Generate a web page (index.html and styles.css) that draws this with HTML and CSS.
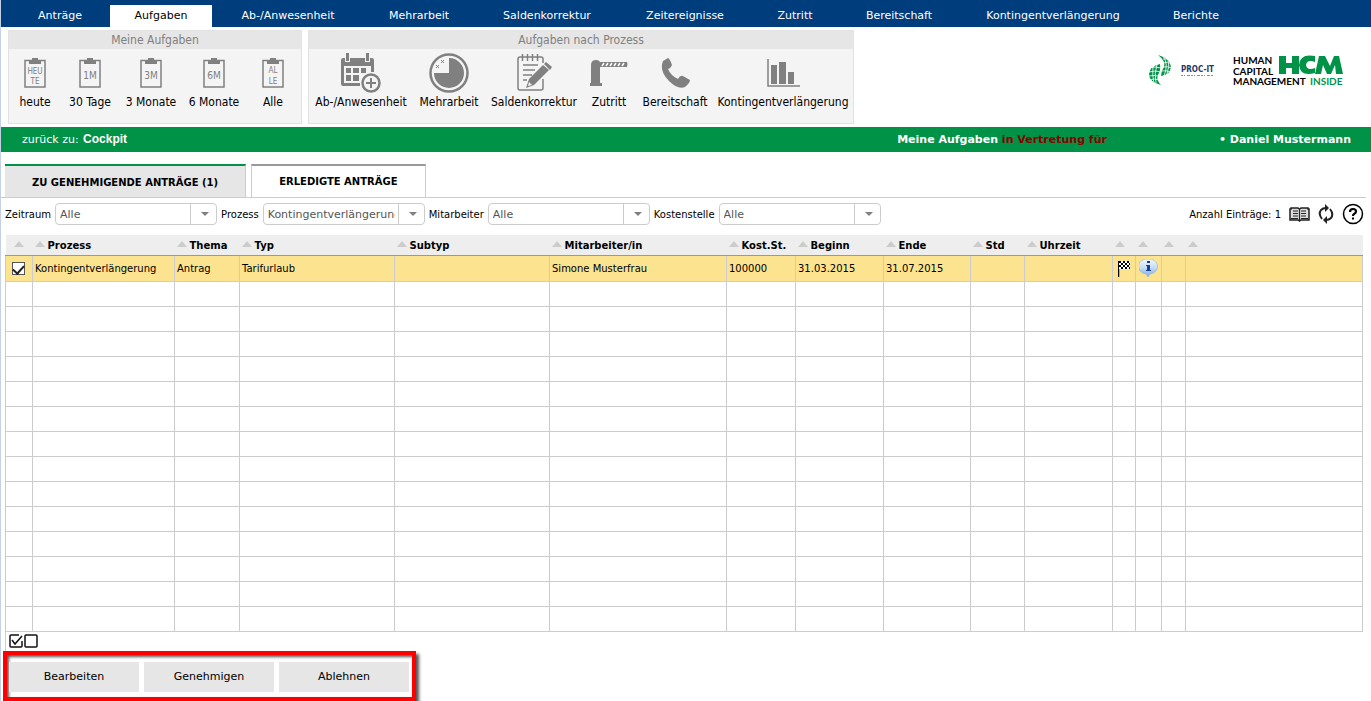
FILE: index.html
```html
<!DOCTYPE html>
<html lang="de">
<head>
<meta charset="utf-8">
<title>Meine Aufgaben</title>
<link rel="stylesheet" href="styles.css">
</head>
<body>
<svg class="defs" width="0" height="0" aria-hidden="true">
  <symbol id="board" viewBox="0 0 22 30">
    <path d="M1 2.500H21V29H1Z" fill="#f4f4f4" stroke="#808080" stroke-width="1.500"/>
    <path d="M5 2h3V0h6v2h3v4H5z" fill="#808080"/>
  </symbol>
</svg>
<nav class="nav">
  <a href="#">Anträge</a>
  <a href="#" class="current" aria-current="page">Aufgaben</a>
  <a href="#">Ab-/Anwesenheit</a>
  <a href="#">Mehrarbeit</a>
  <a href="#">Saldenkorrektur</a>
  <a href="#">Zeitereignisse</a>
  <a href="#">Zutritt</a>
  <a href="#">Bereitschaft</a>
  <a href="#">Kontingentverlängerung</a>
  <a href="#">Berichte</a>
</nav>

<header class="toolbar">
  <section class="panel">
    <h2>Meine Aufgaben</h2>
    <div class="tools tools-time">
      <a href="#"><span class="icon"><svg width="22" height="30" viewBox="0 0 22 30"><use href="#board"/><text x="11" y="16" class="note small">HEU</text><text x="11" y="26" class="note small">TE</text></svg></span>heute</a>
      <a href="#"><span class="icon"><svg width="22" height="30" viewBox="0 0 22 30"><use href="#board"/><text x="11" y="21" class="note">1M</text></svg></span>30 Tage</a>
      <a href="#"><span class="icon"><svg width="22" height="30" viewBox="0 0 22 30"><use href="#board"/><text x="11" y="21" class="note">3M</text></svg></span>3 Monate</a>
      <a href="#"><span class="icon"><svg width="22" height="30" viewBox="0 0 22 30"><use href="#board"/><text x="11" y="21" class="note">6M</text></svg></span>6 Monate</a>
      <a href="#"><span class="icon"><svg width="22" height="30" viewBox="0 0 22 30"><use href="#board"/><text x="11" y="15" class="note small">AL</text><text x="11" y="26" class="note small">LE</text></svg></span>Alle</a>
    </div>
  </section>
  <section class="panel">
    <h2>Aufgaben nach Prozess</h2>
    <div class="tools tools-process">
      <a href="#"><span class="icon"><svg width="40" height="40" viewBox="0 0 40 40">
        <path d="M0 7q0-2 2-2h29q2 0 2 2v12h-3v-6H3v17h16v3H2q-2 0-2-2z" fill="#808080"/>
        <path d="M4 0h5v9H4zM24 0h5v9h-5z" fill="#f4f4f4"/>
        <path d="M5 0h3v8H5zM25 0h3v8h-3zM5 15h5v5H5zM12 15h6v5h-6zM20 15h5v5h-5zM5 22h5v6H5zM12 22h6v6h-6z" fill="#808080"/>
        <circle cx="30" cy="30" r="11" fill="#f4f4f4"/>
        <circle cx="30" cy="30" r="8.500" fill="#f4f4f4" stroke="#808080" stroke-width="2.500"/>
        <path d="M30 25v10M25 30h10" stroke="#808080" stroke-width="2"/></svg></span>Ab-/Anwesenheit</a>
      <a href="#"><span class="icon"><svg width="40" height="40" viewBox="0 0 40 40">
        <circle cx="20" cy="20" r="18.500" fill="none" stroke="#808080" stroke-width="2.500"/>
        <path d="M20 5A15 15 0 1 1 5 20H20Z" fill="#808080"/>
        <path d="M12 7l3 3M15 7l-3 3M7 12l3 3M10 12l-3 3" stroke="#808080"/></svg></span>Mehrarbeit</a>
      <a href="#"><span class="icon"><svg width="36" height="38" viewBox="0 0 36 38">
        <path d="M27 25v9q0 2-2 2H4q-2 0-2-2V5q0-2 2-2h21q2 0 2 2v4" fill="none" stroke="#808080" stroke-width="1.500"/>
        <path d="M6.500 0v7M11.500 0v7M16.500 0v7M21.500 0v7" stroke="#808080" stroke-width="1.500"/>
        <path d="M7 11h15M7 16h12M7 21h9M7 26h4" stroke="#808080" stroke-width="1.500"/>
        <path d="M10 34l3-9 14-14 6 5-15 15z" fill="#808080"/><path d="M12 32l1-4 3 3z" fill="#f4f4f4"/>
        <path d="M28 10l2-2 6 5-2 3z" fill="#808080"/></svg></span>Saldenkorrektur</a>
      <a href="#"><span class="icon"><svg width="38" height="26" viewBox="0 0 38 26">
        <path d="M1 15V5q0-5 5-5t4 5v18h2v3H0v-3h1z" fill="#808080"/>
        <path d="M10 2h27q1 2 0 5H10z" fill="#808080"/>
        <path d="M12 6l2-3M16 6l2-3M20 6l2-3M24 6l2-3M28 6l2-3M32 6l2-3" stroke="#fff" stroke-width="1.500"/></svg></span>Zutritt</a>
      <a href="#"><span class="icon"><svg width="29" height="30" viewBox="0 0 29 30">
        <path d="M2 3L7 0q2 1 4 7-1 3-4 4 3 7 10 10 2-4 5-3l7 4q0 3-5 7-7 3-16-6Q-2 13 2 3z" fill="#808080"/></svg></span>Bereitschaft</a>
      <a href="#"><span class="icon"><svg width="33" height="28" viewBox="0 0 33 28">
        <path d="M1 0v27h32" fill="none" stroke="#808080" stroke-width="1.500"/>
        <path d="M4 6h6v19H4zM12 3h7v22h-7zM21 13h6v12h-6z" fill="#808080"/></svg></span>Kontingentverlängerung</a>
    </div>
  </section>
  <div class="logos">
    <svg width="68" height="31" viewBox="0 0 68 31" role="img" aria-label="PROC-IT">
      <g fill="#009247">
        <path d="M9 0Q21 3 22 12 21 20 12 21 12 16 15 12 17 6 9 0z"/>
        <path d="M11 9Q1 11 0 19 0 27 12 30 7 25 9 20 12 15 11 9z"/>
      </g>
      <path d="M0 13Q6 11 12 13M0 17Q6 15 12 17M0 21Q5 20 10 21M1 25Q5 23 10 25M14 4Q18 3 22 6M14 8Q18 6 23 9M14 12Q18 11 23 13M12 16Q17 15 22 17M4 10Q3 20 5 29M8 9Q5 19 7 28M14 1Q20 9 15 21M19 4Q21 11 18 19" fill="none" stroke="#fff" stroke-width=".8"/>
      <text x="32" y="17" class="proc">PROC-IT</text>
      <path d="M32 20.500h33" stroke="#8290ad" stroke-dasharray="2 1 1 2 3 1"/>
    </svg>
    <svg width="110" height="32" viewBox="0 0 110 32" role="img" aria-label="Human Capital Management inside HCM">
      <text x="0" y="9" class="word">HUMAN</text>
      <text x="0" y="20" class="word">CAPITAL</text>
      <text x="0" y="30" class="word">MANAGEMENT</text>
      <text x="77" y="30" class="word green">INSIDE</text>
      <path d="M46 1h7v7h6V1h7v18h-7v-6h-6v6h-7z" fill="#009247"/>
      <path d="M82 1v6q-8-3-9 3 1 6 9 3v5Q67 22 66 10 67-2 82 1zM86 1h6l5 10 4-10h5l4 18h-7l-1-9-4 9h-4l-4-9-2 9h-6z" fill="#009247"/>
    </svg>
  </div>
</header>

<div class="status">
  <p>zurück zu: <a href="#">Cockpit</a></p>
  <p class="user"><b>Meine Aufgaben <em>in Vertretung für</em></b><b>• Daniel Mustermann</b></p>
</div>

<main>
  <div class="tabs">
    <button type="button" class="tab active">ZU GENEHMIGENDE ANTRÄGE (1)</button>
    <button type="button" class="tab">ERLEDIGTE ANTRÄGE</button>
  </div>

  <div class="filters">
    <label for="f1">Zeitraum</label><span class="combo"><select id="f1"><option>Alle</option></select></span>
    <label for="f2">Prozess</label><span class="combo"><select id="f2"><option>Kontingentverlängerung</option></select></span>
    <label for="f3">Mitarbeiter</label><span class="combo"><select id="f3"><option>Alle</option></select></span>
    <label for="f4">Kostenstelle</label><span class="combo"><select id="f4"><option>Alle</option></select></span>
    <span class="count">Anzahl Einträge: 1</span>
    <span class="icons">
    <button type="button" class="tool" aria-label="Handbuch"><svg width="21" height="15" viewBox="0 0 21 15"><path d="M1 2h1V1h7l1.500 1L12 1h7v1h1v11h-8l-1.500 1L9 13H1z" fill="#ddd" stroke="#222" stroke-width="1.500"/><path d="M10.500 2v12M4 4h5M4 6.500h5M4 9h5M12 4h5M12 6.500h5M12 9h5M2 11.500h7M12 11.500h7" stroke="#222" stroke-width="1.200"/></svg></button>
    <button type="button" class="tool" aria-label="Aktualisieren"><svg width="16" height="20" viewBox="0 0 16 20"><path d="M4 15Q0 10 3 6q2-2 5-2M12 5q4 5 1 9-2 2-5 2" fill="none" stroke="#222" stroke-width="2"/><path d="M7 0l4 4-4 4zM9 12l-4 4 4 4z" fill="#222"/></svg></button>
    <button type="button" class="tool" aria-label="Hilfe"><svg width="22" height="22" viewBox="0 0 22 22"><circle cx="11" cy="11" r="9.500" fill="#fff" stroke="#000" stroke-width="1.500"/><path d="M8 9q0-3 3-3t3 2.500q0 1.500-2 2.500-1 .5-1 2" fill="none" stroke="#000" stroke-width="2.200"/><path d="M10 14.500h2v2h-2z"/></svg></button>
    </span>
  </div>

  <table class="grid">
    <colgroup><col class="c27"><col class="c142"><col class="c65"><col class="c155"><col class="c155"><col class="c177"><col class="c69"><col class="c88"><col class="c87"><col class="c54"><col class="c88"><col class="c23"><col class="c26"><col class="c24"><col></colgroup>
    <thead><tr><th class="mid"></th><th>Prozess</th><th>Thema</th><th>Typ</th><th>Subtyp</th><th>Mitarbeiter/in</th><th>Kost.St.</th><th>Beginn</th><th>Ende</th><th>Std</th><th>Uhrzeit</th><th></th><th></th><th></th><th></th></tr></thead>
    <tbody>
      <tr class="selected"><td class="mid"><input type="checkbox" checked aria-label="Antrag auswählen"></td><td>Kontingentverlängerung</td><td>Antrag</td><td>Tarifurlaub</td><td></td><td>Simone Musterfrau</td><td>100000</td><td>31.03.2015</td><td>31.07.2015</td><td></td><td></td>
        <td class="mid"><svg width="12" height="17" viewBox="0 0 12 17"><path d="M.5 1v16" stroke="#000" stroke-width="1.500"/><path d="M1 1h11v8H1z" fill="#fff"/><path d="M1 1h2v2H1zM5 1h2v2H5zM9 1h2v2H9zM3 3h2v2H3zM7 3h2v2H7zM11 3h1v2h-1zM1 5h2v2H1zM5 5h2v2H5zM9 5h2v2H9zM3 7h2v2H3zM7 7h2v2H7zM11 7h1v2h-1z"/></svg></td>
        <td class="mid"><svg width="20" height="18" viewBox="0 0 20 18"><defs><linearGradient id="b" x2="0" y2="1"><stop offset="0" stop-color="#f2f8fe"/><stop offset=".5" stop-color="#c3dcf6"/><stop offset="1" stop-color="#7fa9dc"/></linearGradient></defs><path d="M9 0a8.500 7.500 0 0 1 2 15l-2 3-2-3A8.500 7.500 0 0 1 9 0z" fill="url(#b)" stroke="#8db2e2" stroke-width=".6"/><path d="M8 2h3v2H8zM7 6h4v5h1v1H7v-1h1V7H7z" fill="#173d9a"/></svg></td>
        <td></td><td></td></tr>
      <tr><td></td><td></td><td></td><td></td><td></td><td></td><td></td><td></td><td></td><td></td><td></td><td></td><td></td><td></td><td></td></tr>
      <tr><td></td><td></td><td></td><td></td><td></td><td></td><td></td><td></td><td></td><td></td><td></td><td></td><td></td><td></td><td></td></tr>
      <tr><td></td><td></td><td></td><td></td><td></td><td></td><td></td><td></td><td></td><td></td><td></td><td></td><td></td><td></td><td></td></tr>
      <tr><td></td><td></td><td></td><td></td><td></td><td></td><td></td><td></td><td></td><td></td><td></td><td></td><td></td><td></td><td></td></tr>
      <tr><td></td><td></td><td></td><td></td><td></td><td></td><td></td><td></td><td></td><td></td><td></td><td></td><td></td><td></td><td></td></tr>
      <tr><td></td><td></td><td></td><td></td><td></td><td></td><td></td><td></td><td></td><td></td><td></td><td></td><td></td><td></td><td></td></tr>
      <tr><td></td><td></td><td></td><td></td><td></td><td></td><td></td><td></td><td></td><td></td><td></td><td></td><td></td><td></td><td></td></tr>
      <tr><td></td><td></td><td></td><td></td><td></td><td></td><td></td><td></td><td></td><td></td><td></td><td></td><td></td><td></td><td></td></tr>
      <tr><td></td><td></td><td></td><td></td><td></td><td></td><td></td><td></td><td></td><td></td><td></td><td></td><td></td><td></td><td></td></tr>
      <tr><td></td><td></td><td></td><td></td><td></td><td></td><td></td><td></td><td></td><td></td><td></td><td></td><td></td><td></td><td></td></tr>
      <tr><td></td><td></td><td></td><td></td><td></td><td></td><td></td><td></td><td></td><td></td><td></td><td></td><td></td><td></td><td></td></tr>
      <tr><td></td><td></td><td></td><td></td><td></td><td></td><td></td><td></td><td></td><td></td><td></td><td></td><td></td><td></td><td></td></tr>
      <tr><td></td><td></td><td></td><td></td><td></td><td></td><td></td><td></td><td></td><td></td><td></td><td></td><td></td><td></td><td></td></tr>
      <tr><td></td><td></td><td></td><td></td><td></td><td></td><td></td><td></td><td></td><td></td><td></td><td></td><td></td><td></td><td></td></tr>
    </tbody>
  </table>

  <div class="marks">
    <button type="button" class="tool" aria-label="Alle auswählen"><svg width="14" height="14" viewBox="0 0 14 14"><path d="M10 1H2Q1 1 1 2v10q0 1 1 1h10q1 0 1-1V7" fill="none" stroke="#111" stroke-width="1.500"/><path d="M3 6l3 4 7-8" fill="none" stroke="#111" stroke-width="1.500"/></svg></button>
    <button type="button" class="tool" aria-label="Auswahl aufheben"><svg width="14" height="14" viewBox="0 0 14 14"><rect x="1" y="1" width="12" height="12" rx="1" fill="none" stroke="#111" stroke-width="1.500"/></svg></button>
  </div>

  <div class="actions">
    <button type="button">Bearbeiten</button>
    <button type="button">Genehmigen</button>
    <button type="button">Ablehnen</button>
  </div>
</main>
</body>
</html>
```
FILE: styles.css
```css
* { box-sizing: border-box; }
body {
  margin: 0;
  min-height: 100vh;
  border-left: 1px solid #c3d0e6;
  background: #fff;
  color: #000;
  font: 11px/14px Verdana, "DejaVu Sans", sans-serif;
}
a { color: inherit; text-decoration: none; }
button { border: 0; padding: 0; font: inherit; color: inherit; }
svg { display: block; }
.defs { position: absolute; }

.nav {
  display: grid;
  grid-template-columns: 100px 102px 152px 110px 146px 130px 90px 118px 190px 96px;
  height: 27px;
  padding: 5px 0 0 9px;
  background: #003d7d;
  color: #fff;
}
.nav a { padding-top: 4px; text-align: center; }
.nav .current { background: #fff; color: #000; }

.toolbar { display: flex; gap: 6px; padding: 3px 28px 3px 7px; }
.panel {
  border: 1px solid #e2e2e2;
  background: #f4f4f4;
  font: 12px/14px Tahoma, "DejaVu Sans Condensed", sans-serif;
}
.panel h2 {
  margin: 0;
  height: 18px;
  background: #e6e6e6;
  color: #808080;
  font: inherit;
  line-height: 18px;
  text-align: center;
}
.tools { display: grid; padding: 4px 1px 14px; }
.tools-time { grid-template-columns: 50px 60px 62px 64px 54px; }
.tools-process { grid-template-columns: 102px 74px 96px 54px 78px 138px; }
.tools a { display: flex; flex-direction: column; align-items: center; white-space: nowrap; }
.icon { display: flex; align-items: center; height: 40px; margin-bottom: 2px; }
.note { fill: #808080; font: 10px "DejaVu Sans Condensed", sans-serif; text-anchor: middle; }
.note.small { font-size: 8px; }
.logos { display: flex; gap: 16px; margin-left: auto; padding-top: 25px; }
.proc { fill: #1f3864; font: bold 8px "DejaVu Sans Condensed", sans-serif; }
.word { fill: #000; font: bold 10px Lato, sans-serif; }
.word.green { fill: #009247; }

.status {
  display: flex;
  justify-content: space-between;
  align-items: center;
  height: 25px;
  padding: 0 20px 0 21px;
  background: #009247;
  color: #fff;
}
.status p { margin: 0; }
.status a { margin-left: 1px; font: bold 12px "Liberation Sans", sans-serif; }
.user { display: flex; gap: 112px; }
.user em { color: #8b0000; font-style: normal; }

.tabs {
  display: flex;
  gap: 5px;
  margin: 12px 5px 5px 0;
  padding-left: 4px;
  border-bottom: 1px solid #ccc;
}
.tab {
  height: 33px;
  padding: 0 27px;
  border: 1px solid #ccc;
  border-top: 2px solid #999;
  border-bottom: 0;
  background: #fff;
  font-size: 10px;
  font-weight: bold;
}
.tab.active { padding-top: 2px; border-top-color: #009247; border-left: 0; background: #e6e6e6; }

.filters {
  display: flex;
  align-items: center;
  gap: 4px;
  height: 22px;
  margin: 0 7px 10px 4px;
  font-size: 10px;
}
.filters label, .count { padding-top: 2px; }
.combo { position: relative; width: 162px; height: 22px; }
.combo select {
  appearance: none;
  width: 100%;
  height: 100%;
  padding: 0 29px 0 4px;
  border: 1px solid #ccc;
  border-radius: 4px;
  background: #fff;
  color: #555;
  font: 11px "DejaVu Sans", sans-serif;
}
.combo::before {
  content: "";
  position: absolute;
  right: 26px;
  top: 0;
  height: 100%;
  border-left: 1px solid #ccc;
}
.combo::after {
  content: "";
  position: absolute;
  right: 8px;
  top: 9px;
  border: 4px solid transparent;
  border-top-color: #808080;
  border-bottom: 0;
}
.count { margin-left: auto; }
.icons { display: flex; align-items: center; gap: 8px; margin-left: 4px; }
.tool { background: none; }

.grid {
  width: calc(100% - 12px);
  margin-left: 4px;
  border-collapse: collapse;
  table-layout: fixed;
  font-size: 10px;
}
.grid th {
  height: 20px;
  padding: 2px 2px 0;
  background: #eee;
  border-bottom: 1px solid #999;
  text-align: left;
  white-space: nowrap;
}
.grid th::before {
  content: "";
  display: inline-block;
  margin-right: 3px;
  border: 5px solid transparent;
  border-top: 0;
  border-bottom: 6px solid #ccc;
  vertical-align: 2px;
}
.grid th.mid::before { margin: 0; }
.grid td { height: 25px; padding: 2px 2px 0; border: 1px solid #ccc; white-space: nowrap; }
.grid .selected td { height: 26px; background: #fce38f; border-top-color: #999; }
.grid td.mid { padding: 0; }
.grid .mid { text-align: center; }
.mid svg { margin: 0 auto; }
.mid input {
  appearance: none;
  display: block;
  width: 13px;
  height: 13px;
  margin: 0 6px;
  border: 1px solid #555;
  background: #fff;
}
.mid input:checked::after {
  content: "";
  display: block;
  width: 5px;
  height: 9px;
  margin: 0 auto;
  border: solid #222;
  border-width: 0 2px 2px 0;
  transform: rotate(42deg);
}
.c23 { width: 23px; }
.c24 { width: 24px; }
.c26 { width: 26px; }
.c27 { width: 27px; }
.c54 { width: 54px; }
.c65 { width: 65px; }
.c69 { width: 69px; }
.c87 { width: 87px; }
.c88 { width: 88px; }
.c142 { width: 142px; }
.c155 { width: 155px; }
.c177 { width: 177px; }

.marks {
  display: flex;
  gap: 1px;
  height: 19px;
  margin-left: 4px;
  padding: 2px 3px;
  border-left: 1px solid #c3d0e6;
}
.actions {
  display: flex;
  gap: 5px;
  width: max-content;
  margin-left: 2px;
  padding: 7px 3px 5px 2px;
  border: 4px solid #f00;
  box-shadow: 3px 3px 3px #555, inset 2px 2px 3px #555;
}
.actions button { width: 130px; height: 30px; padding-top: 1px; background: #e6e6e6; }
```
